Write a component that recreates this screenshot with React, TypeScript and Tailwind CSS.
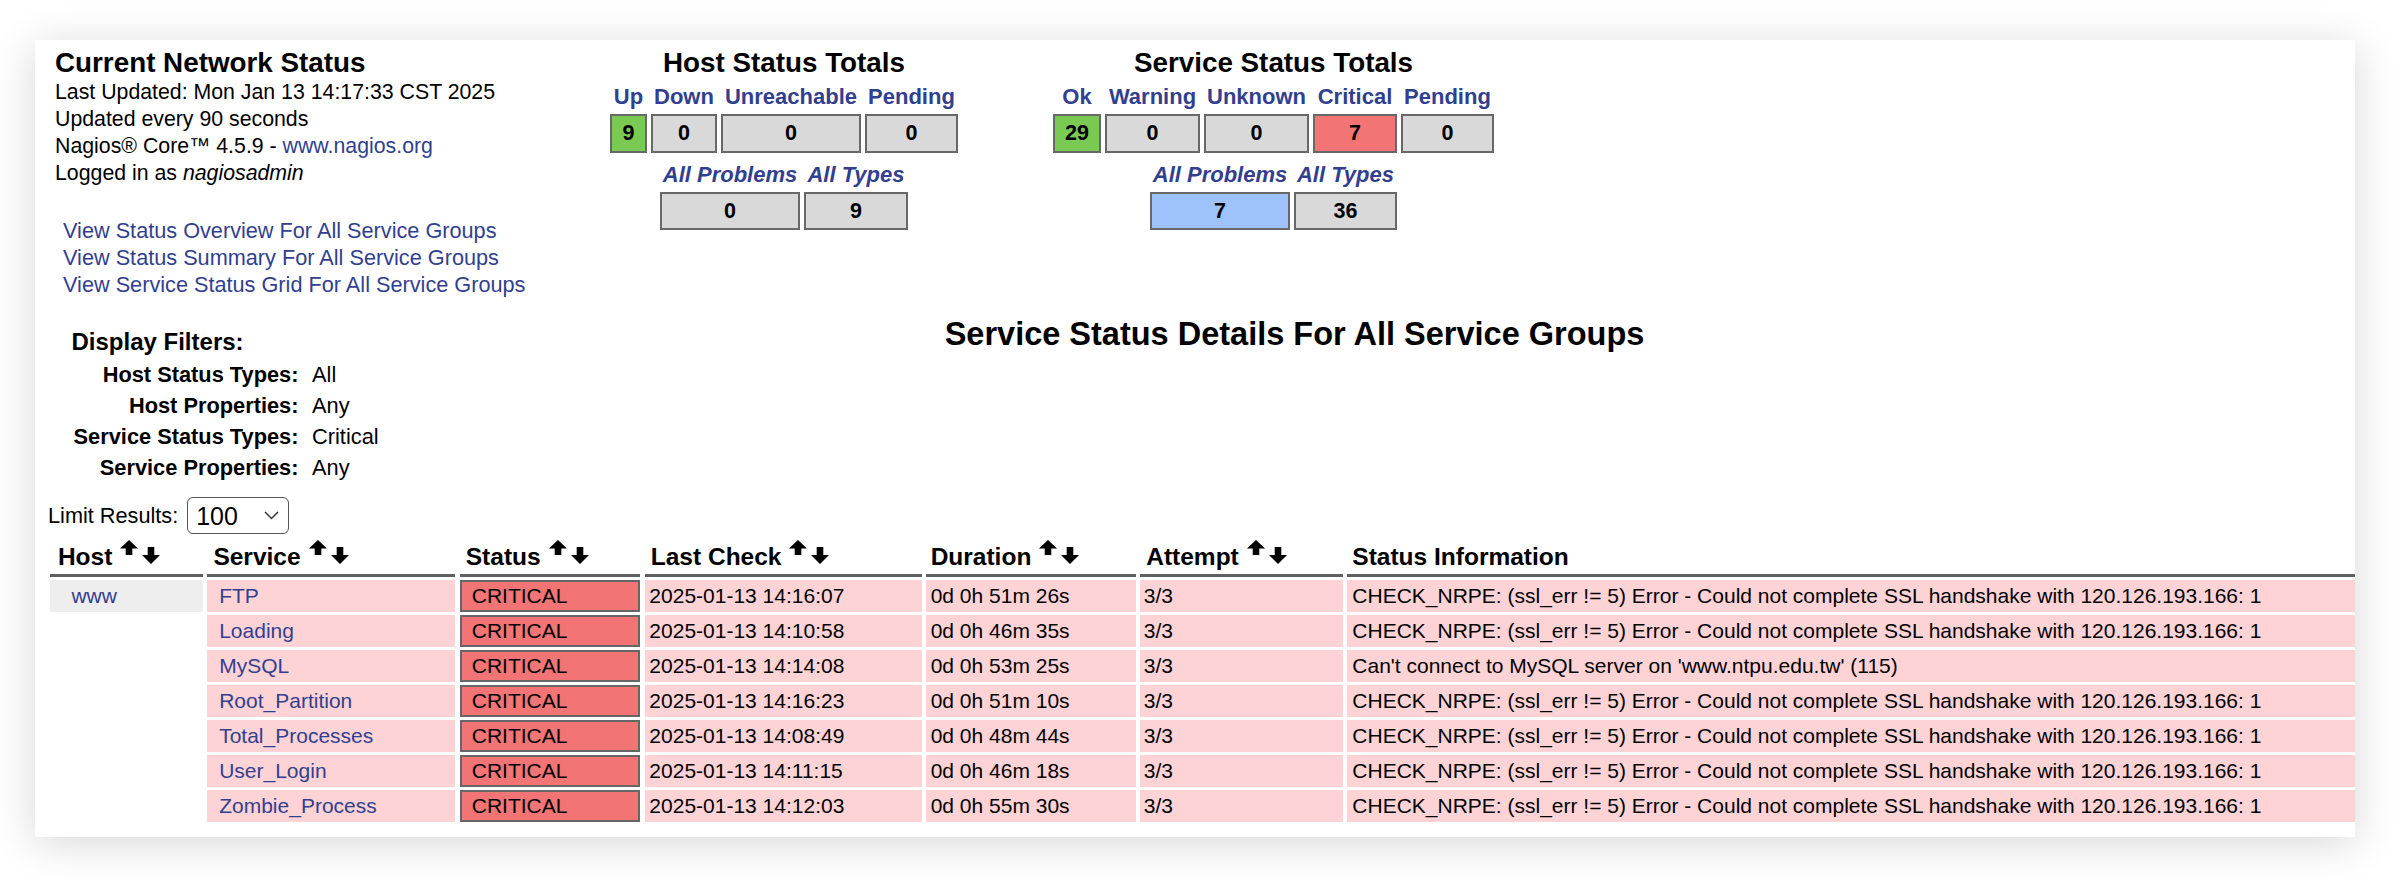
import React from "react";

const ssl =
  "CHECK_NRPE: (ssl_err != 5) Error - Could not complete SSL handshake with 120.126.193.166: 1";

const rows = [
  { service: "FTP", last: "2025-01-13 14:16:07", dur: "0d 0h 51m 26s", info: ssl },
  { service: "Loading", last: "2025-01-13 14:10:58", dur: "0d 0h 46m 35s", info: ssl },
  {
    service: "MySQL",
    last: "2025-01-13 14:14:08",
    dur: "0d 0h 53m 25s",
    info: "Can't connect to MySQL server on 'www.ntpu.edu.tw' (115)",
  },
  { service: "Root_Partition", last: "2025-01-13 14:16:23", dur: "0d 0h 51m 10s", info: ssl },
  { service: "Total_Processes", last: "2025-01-13 14:08:49", dur: "0d 0h 48m 44s", info: ssl },
  { service: "User_Login", last: "2025-01-13 14:11:15", dur: "0d 0h 46m 18s", info: ssl },
  { service: "Zombie_Process", last: "2025-01-13 14:12:03", dur: "0d 0h 55m 30s", info: ssl },
];

function UpArrow() {
  return (
    <svg width="18" height="15" viewBox="0 0 18 15">
      <path d="M9 0 L18 8.5 L12.3 8.5 L12.3 15 L5.7 15 L5.7 8.5 L0 8.5 Z" fill="#000" />
    </svg>
  );
}

function DownArrow() {
  return (
    <svg width="18" height="17" viewBox="0 0 18 17">
      <path d="M5.7 0 L12.3 0 L12.3 8 L18 8 L9 17 L0 8 L5.7 8 Z" fill="#000" />
    </svg>
  );
}

function Box({ value, color = "bg-[#d9d9d9]", h = "h-[38.4px]" }: { value: string; color?: string; h?: string }) {
  return (
    <div className={`flex ${h} items-center justify-center border-2 border-[#686868] ${color} text-[21.5px] font-bold`}>
      {value}
    </div>
  );
}

function HeadCell({ label, sort = true, pad = "pl-[6px]" }: { label: string; sort?: boolean; pad?: string }) {
  return (
    <div className={`flex h-[39px] items-end border-b-[3px] border-[#606060] pb-[2.7px] ${pad}`}>
      <span className="whitespace-nowrap text-[24.5px] font-bold leading-[28px]">{label}</span>
      {sort && (
        <span className="ml-[8px] flex gap-[4px] self-start pt-[2px]">
          <UpArrow />
          <span className="mt-[7px]">
            <DownArrow />
          </span>
        </span>
      )}
    </div>
  );
}

export default function App() {
  return (
    <div className="h-[878px] w-[2396px] bg-white pl-[35px] pt-[40px] font-['Liberation_Sans',Arial,sans-serif] text-[21px] text-black">
      <div className="h-[797px] w-[2320px] overflow-hidden bg-white shadow-[0_6px_40px_rgba(0,0,0,0.16)]">

        {/* Header row */}
        <div className="flex items-start pl-[20px] pt-[5.8px]">

          {/* Info box */}
          <div className="w-[555px]">
            <div className="text-[27.8px] font-bold leading-[33px]">Current Network Status</div>
            <div className="text-[21.3px] leading-[27px]">
              <div>Last Updated: Mon Jan 13 14:17:33 CST 2025</div>
              <div>Updated every 90 seconds</div>
              <div>
                Nagios® Core™ 4.5.9 - <a className="text-[#323f8f]">www.nagios.org</a>
              </div>
              <div>
                Logged in as <i>nagiosadmin</i>
              </div>
            </div>
            <div className="ml-[8px] mt-[30px] flex flex-col text-[21.7px] leading-[27px] text-[#323f8f]">
              <a>View Status Overview For All Service Groups</a>
              <a>View Status Summary For All Service Groups</a>
              <a>View Service Status Grid For All Service Groups</a>
            </div>
          </div>

          {/* Host totals */}
          <div className="flex w-[348px] flex-col items-center">
            <div className="text-[27.8px] font-bold leading-[33px]">Host Status Totals</div>
            <div className="mt-[5.4px] grid grid-cols-[36.7px_65.7px_139.7px_92.7px] gap-x-[4.3px] text-center text-[22px] font-bold leading-[25px] text-[#323f8f]">
              <span>Up</span>
              <span>Down</span>
              <span>Unreachable</span>
              <span>Pending</span>
            </div>
            <div className="mt-[5.1px] grid grid-cols-[36.7px_65.7px_139.7px_92.7px] gap-x-[4.3px]">
              <Box value="9" color="bg-[#79c953]" />
              <Box value="0" />
              <Box value="0" />
              <Box value="0" />
            </div>
            <div className="mt-[9.2px] grid grid-cols-[139.7px_103.7px] gap-x-[4.3px] text-center text-[22px] font-bold italic leading-[25px] text-[#323f8f]">
              <span>All Problems</span>
              <span>All Types</span>
            </div>
            <div className="mt-[5.4px] grid grid-cols-[139.7px_103.7px] gap-x-[4.3px]">
              <Box value="0" h="h-[38px]" />
              <Box value="9" h="h-[38px]" />
            </div>
          </div>

          {/* Service totals */}
          <div className="ml-[95px] flex w-[441px] flex-col items-center">
            <div className="text-[27.8px] font-bold leading-[33px]">Service Status Totals</div>
            <div className="mt-[5.4px] grid grid-cols-[47.7px_94.7px_104.7px_83.7px_92.7px] gap-x-[4.3px] text-center text-[22px] font-bold leading-[25px] text-[#323f8f]">
              <span>Ok</span>
              <span>Warning</span>
              <span>Unknown</span>
              <span>Critical</span>
              <span>Pending</span>
            </div>
            <div className="mt-[5.1px] grid grid-cols-[47.7px_94.7px_104.7px_83.7px_92.7px] gap-x-[4.3px]">
              <Box value="29" color="bg-[#79c953]" />
              <Box value="0" />
              <Box value="0" />
              <Box value="7" color="bg-[#f27474]" />
              <Box value="0" />
            </div>
            <div className="mt-[9.2px] grid grid-cols-[139.7px_102.7px] gap-x-[4.3px] text-center text-[22px] font-bold italic leading-[25px] text-[#323f8f]">
              <span>All Problems</span>
              <span>All Types</span>
            </div>
            <div className="mt-[5.4px] grid grid-cols-[139.7px_102.7px] gap-x-[4.3px]">
              <Box value="7" color="bg-[#9ec2fb]" h="h-[38px]" />
              <Box value="36" h="h-[38px]" />
            </div>
          </div>
        </div>

        {/* Filters + title */}
        <div className="mt-[17px] flex items-start">
          <div className="ml-[34.5px] mt-[12.3px] w-[402px]">
            <div className="ml-[2px] text-[24px] font-bold leading-[29px]">Display Filters:</div>
            <div className="mt-[2.7px] grid grid-cols-[229px_auto] gap-x-[13.5px] whitespace-nowrap text-[21.8px] leading-[31px]">
              <span className="text-right font-bold">Host Status Types:</span>
              <span>All</span>
              <span className="text-right font-bold">Host Properties:</span>
              <span>Any</span>
              <span className="text-right font-bold">Service Status Types:</span>
              <span>Critical</span>
              <span className="text-right font-bold">Service Properties:</span>
              <span>Any</span>
            </div>
          </div>
          <div className="w-[1646px] text-center text-[32.5px] font-bold leading-[38px]">
            Service Status Details For All Service Groups
          </div>
        </div>

        {/* Limit results */}
        <div className="ml-[13px] mt-[14.5px] flex h-[36.7px] items-center">
          <span className="text-[21.7px] leading-[27px]">Limit Results:</span>
          <div className="relative ml-[9px] h-[36.7px] w-[101.5px]">
            <select
              defaultValue="100"
              className="h-full w-full appearance-none rounded-[6px] border-[1.5px] border-[#555] bg-white pl-[8px] text-[25px] leading-[34px] text-black"
            >
              <option>100</option>
            </select>
            <svg
              className="pointer-events-none absolute left-[77px] top-[14px]"
              width="15"
              height="9"
              viewBox="0 0 15 9"
            >
              <path d="M1 1 L7.5 7.5 L14 1" fill="none" stroke="#333" strokeWidth="1.5" />
            </svg>
          </div>
        </div>

        {/* Status table */}
        <div className="ml-[15.4px] mt-[4px] grid grid-cols-[152.6px_248px_180.6px_277px_209.7px_202.3px_1008px] gap-x-[4.4px] gap-y-[3.3px] leading-[31.7px]">
          <HeadCell label="Host" pad="pl-[7.5px]" />
          <HeadCell label="Service" />
          <HeadCell label="Status" />
          <HeadCell label="Last Check" />
          <HeadCell label="Duration" pad="pl-[4.5px]" />
          <HeadCell label="Attempt" />
          <HeadCell label="Status Information" sort={false} pad="pl-[5.4px]" />

          {rows.map((r, i) => (
            <React.Fragment key={r.service}>
              {i === 0 ? (
                <div className="h-[31.7px] bg-[#efeeee] pl-[21px] text-[#323f8f]">www</div>
              ) : (
                <div className="h-[31.7px]" />
              )}
              <div className="h-[31.7px] bg-[#fed3d6] pl-[11.8px] text-[#323f8f]">{r.service}</div>
              <div className="h-[31.7px] border-2 border-[#666] bg-[#f27474] pl-[10px] leading-[27.7px]">
                CRITICAL
              </div>
              <div className="h-[31.7px] bg-[#fed3d6] pl-[4.6px]">{r.last}</div>
              <div className="h-[31.7px] bg-[#fed3d6] pl-[4.5px]">{r.dur}</div>
              <div className="h-[31.7px] bg-[#fed3d6] pl-[3.5px]">3/3</div>
              <div className="h-[31.7px] whitespace-nowrap bg-[#fed3d6] pl-[5.4px]">{r.info}</div>
            </React.Fragment>
          ))}
        </div>

      </div>
    </div>
  );
}
